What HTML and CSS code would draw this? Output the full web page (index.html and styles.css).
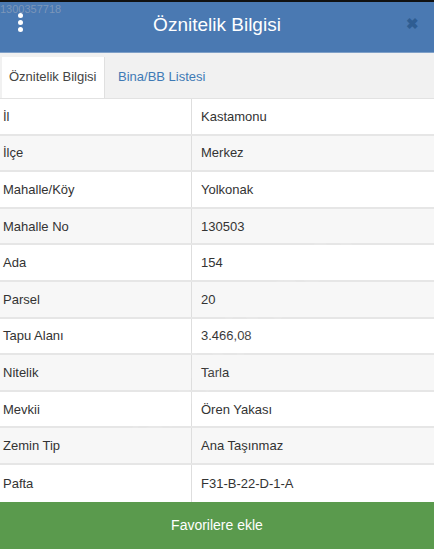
FILE: index.html
```html
<!DOCTYPE html>
<html lang="tr">
<head>
<meta charset="utf-8">
<title>Öznitelik Bilgisi</title>
<link rel="stylesheet" href="styles.css">
</head>
<body>
<div class="page">
  <header class="header">
    <span class="menu"><i></i><i></i><i></i></span>
    <h1 class="title">Öznitelik Bilgisi</h1>
    <span class="close">✖</span>
    <span class="stamp">1300357718</span>
  </header>
  <nav class="tabs">
    <span class="tab active">Öznitelik Bilgisi</span>
    <span class="tab link">Bina/BB Listesi</span>
  </nav>
  <div class="table">
    <div class="row"><span class="k">İl</span><span class="v">Kastamonu</span></div>
    <div class="row"><span class="k">İlçe</span><span class="v">Merkez</span></div>
    <div class="row"><span class="k">Mahalle/Köy</span><span class="v">Yolkonak</span></div>
    <div class="row"><span class="k">Mahalle No</span><span class="v">130503</span></div>
    <div class="row"><span class="k">Ada</span><span class="v">154</span></div>
    <div class="row"><span class="k">Parsel</span><span class="v">20</span></div>
    <div class="row"><span class="k">Tapu Alanı</span><span class="v">3.466,08</span></div>
    <div class="row"><span class="k">Nitelik</span><span class="v">Tarla</span></div>
    <div class="row"><span class="k">Mevkii</span><span class="v">Ören Yakası</span></div>
    <div class="row"><span class="k">Zemin Tip</span><span class="v">Ana Taşınmaz</span></div>
    <div class="row"><span class="k">Pafta</span><span class="v">F31-B-22-D-1-A</span></div>
  </div>
  <button class="fav">Favorilere ekle</button>
  <div class="watermark">sahibinden</div>
</div>
</body>
</html>
```

FILE: styles.css
```css
* { box-sizing: border-box; }
html, body { margin: 0; padding: 0; }
body {
  font-family: "Liberation Sans", Arial, sans-serif;
  color: #333;
  background: #fff;
}
.page {
  position: relative;
  height: 549px;
  display: flex;
  flex-direction: column;
  overflow: hidden;
  border-top: 2px solid #111;
}
.header {
  position: relative;
  height: 51px;
  flex: none;
  background: #4a79b2;
  border-bottom: 1px solid #7fa0c8;
  display: flex;
  align-items: center;
  justify-content: center;
}
.title {
  margin: 0;
  font-size: 19px;
  font-weight: normal;
  color: #fff;
  margin-top: -4px;
}
.menu {
  position: absolute;
  left: 18px;
  top: 11px;
  display: flex;
  flex-direction: column;
  gap: 2px;
}
.menu i {
  display: block;
  width: 5px;
  height: 5px;
  border-radius: 50%;
  background: #fff;
}
.close {
  position: absolute;
  right: 15px;
  top: 13px;
  font-size: 15px;
  font-weight: bold;
  color: #2f5d92;
}
.stamp {
  position: absolute;
  left: 0;
  top: 1px;
  font-size: 11px;
  color: rgba(140, 160, 188, 0.75);
}
.tabs {
  flex: none;
  height: 46px;
  background: #f1f1f1;
  display: flex;
  align-items: flex-end;
  padding-left: 2px;
  border-bottom: 1px solid #e2e2e2;
}
.tab {
  font-size: 13px;
  height: 41px;
  display: flex;
  align-items: center;
  white-space: nowrap;
  flex: none;
  padding-bottom: 2px;
}
.tab.active {
  background: #fff;
  width: 103px;
  padding-left: 7px;
  color: #444;
  border-right: 1px solid #e0e0e0;
}
.tab.link {
  color: #3f7ab5;
  padding-left: 13px;
}
.table {
  flex: none;
}
.row {
  display: grid;
  grid-template-columns: 192px 1fr;
  height: 36.6px;
  border-bottom: 2px solid #e6e6e6;
  font-size: 13px;
}
.row:nth-child(even) { background: #f7f7f7; }
.row:last-child { border-bottom: none; }
.k {
  display: flex;
  align-items: center;
  padding-left: 3px;
  border-right: 1px solid #dedede;
}
.v {
  display: flex;
  align-items: center;
  padding-left: 9px;
}
.fav {
  flex: 1;
  border: none;
  margin: 0;
  background: #5a9a4d;
  color: #fff;
  font-family: "Liberation Sans", Arial, sans-serif;
  font-size: 14px;
  padding: 0;
}
.watermark {
  position: absolute;
  left: 90px;
  top: 300px;
  font-size: 56px;
  font-weight: bold;
  color: rgba(255, 255, 255, 0.1);
  transform: rotate(-45deg);
  pointer-events: none;
}
```
